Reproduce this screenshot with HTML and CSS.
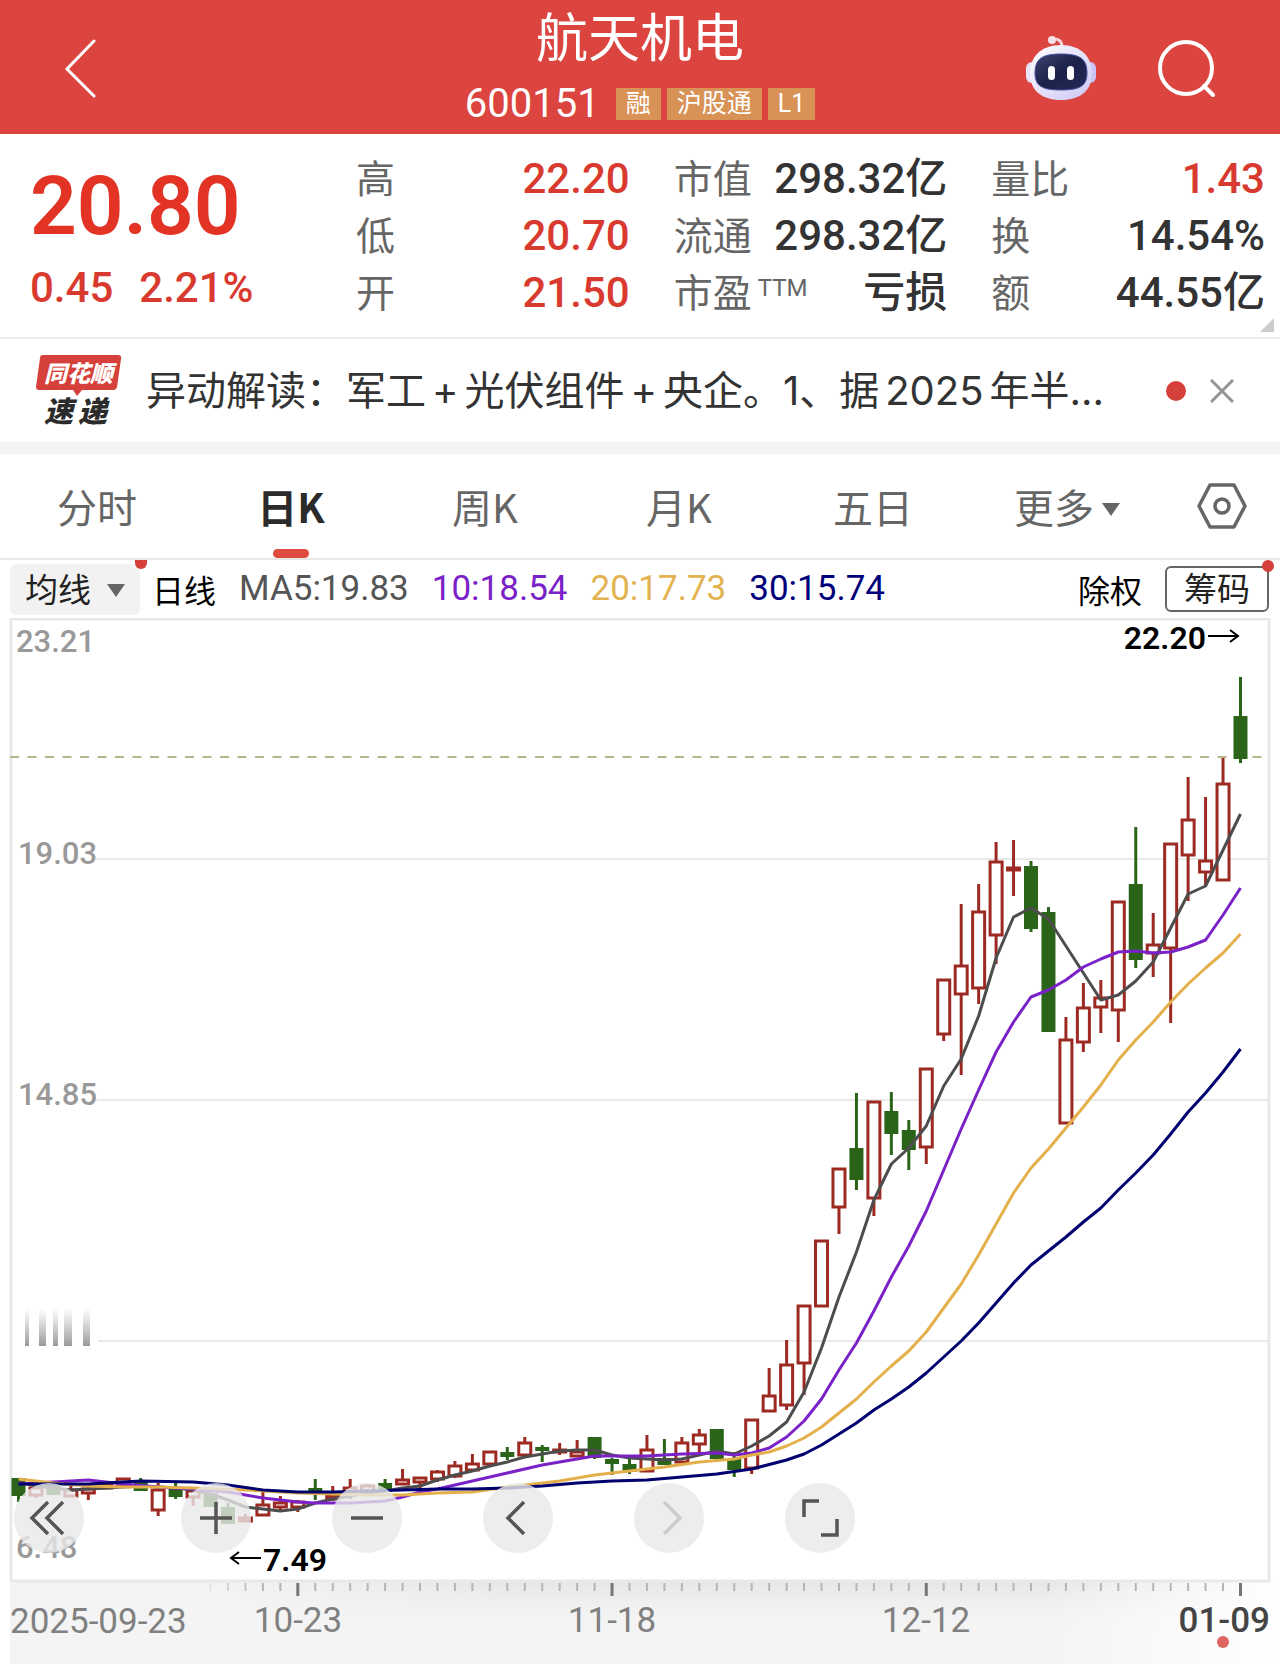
FILE: index.html
```
<!DOCTYPE html>
<html lang="zh-CN">
<head>
    <meta charset="UTF-8">
    <meta name="viewport" content="width=device-width, initial-scale=1.0">
    <title>航天机电 600151</title>
    <link rel="stylesheet" href="styles.css">
</head>
<body>
    <header class="header">
        <button type="button" class="icon-btn back" aria-label="返回">
            <svg width="32" height="60" viewBox="0 0 32 60"><path d="M30 3 L3 31 L30 58" fill="none" stroke="#fff" stroke-width="3" stroke-linecap="round"/></svg>
        </button>
        <div class="title">
            <h1>航天机电</h1>
            <div class="code">
                <span class="code-num">600151</span>
                <span class="badge">融</span>
                <span class="badge">沪股通</span>
                <span class="badge">L1</span>
            </div>
        </div>
        <div class="header-icons">
            <button type="button" class="icon-btn" aria-label="助手">
                <svg width="70" height="66" viewBox="0 0 70 66">
                    <defs>
                        <linearGradient id="shell" x1="0" y1="0" x2="1" y2="1">
                            <stop offset="0" stop-color="#fff"/>
                            <stop offset="1" stop-color="#cbc6f4"/>
                        </linearGradient>
                        <linearGradient id="face" x1="0" y1="0" x2="1" y2="1">
                            <stop offset="0" stop-color="#3b4470"/>
                            <stop offset="0.5" stop-color="#1b2148"/>
                            <stop offset="1" stop-color="#242b58"/>
                        </linearGradient>
                    </defs>
                    <path d="M26 4 Q36 3 36 12" fill="none" stroke="#f3d5de" stroke-width="3"/>
                    <circle cx="26" cy="5" r="4" fill="#f6dfe6"/>
                    <rect x="0" y="27" width="12" height="21" rx="6" fill="#e6e2fa"/>
                    <rect x="58" y="27" width="12" height="21" rx="6" fill="#c9c4f5"/>
                    <path d="M35 10 C55 10 66 22 66 38 C66 56 54 65 35 65 C16 65 4 56 4 38 C4 22 15 10 35 10 Z" fill="url(#shell)"/>
                    <path d="M35 19 C54 19 61 24 61 38 C61 51 54 55 35 55 C16 55 9 51 9 38 C9 24 16 19 35 19 Z" fill="url(#face)" stroke="#4a4ea0" stroke-width="1"/>
                    <rect x="22" y="31" width="7" height="14" rx="3.5" fill="#fff"/>
                    <rect x="41" y="31" width="7" height="14" rx="3.5" fill="#fff"/>
                </svg>
            </button>
            <button type="button" class="icon-btn" aria-label="搜索">
                <svg width="60" height="60" viewBox="0 0 60 60"><g fill="none" stroke="#fff" stroke-width="4" stroke-linecap="round"><circle cx="30" cy="30" r="26"/><path d="M48 48 L57 57"/></g></svg>
            </button>
        </div>
    </header>

    <section class="quote">
        <div class="last">
            <div class="price">20.80</div>
            <div class="change"><span>0.45</span><span>2.21%</span></div>
        </div>
        <dl class="stats">
            <div><dt>高</dt><dd class="up">22.20</dd></div>
            <div><dt>低</dt><dd class="up">20.70</dd></div>
            <div><dt>开</dt><dd class="up">21.50</dd></div>
        </dl>
        <dl class="stats">
            <div><dt>市值</dt><dd>298.32亿</dd></div>
            <div><dt>流通</dt><dd>298.32亿</dd></div>
            <div><dt>市盈<span class="ttm">TTM</span></dt><dd>亏损</dd></div>
        </dl>
        <dl class="stats">
            <div><dt>量比</dt><dd class="up">1.43</dd></div>
            <div><dt>换</dt><dd>14.54%</dd></div>
            <div><dt>额</dt><dd>44.55亿</dd></div>
        </dl>
        <span class="corner"></span>
    </section>

    <section class="news">
        <svg class="news-logo" width="86" height="94" viewBox="0 -10 86 94">
            <path d="M7 1 H82 Q86 1 85 5 L81 33 Q80 36 77 36 H46 L41 42 L37 36 H3 Q0 36 0 33 L4 4 Q4 1 7 1 Z" fill="#d5403b"/>
            <text x="8" y="28" class="logo-top">同花顺</text>
            <text x="8" y="68" class="logo-bottom">速</text>
            <text x="42" y="68" class="logo-bottom">递</text>
        </svg>
        <p class="news-text">异动解读：军工<span class="spaced">+</span>光伏组件<span class="spaced">+</span>央企。1、据<span class="spaced">2025</span>年半...</p>
        <span class="news-dot"></span>
        <button type="button" class="icon-btn" aria-label="关闭">
            <svg width="24" height="24" viewBox="0 0 24 24"><path d="M1 1 L23 23 M23 1 L1 23" stroke="#949494" stroke-width="3"/></svg>
        </button>
    </section>

    <nav class="tabs">
        <button type="button" class="tab">分时</button>
        <button type="button" class="tab active">日K</button>
        <button type="button" class="tab">周K</button>
        <button type="button" class="tab">月K</button>
        <button type="button" class="tab">五日</button>
        <button type="button" class="tab">更多<svg class="tab-arrow" width="18" height="13" viewBox="0 0 18 13"><path d="M0 0 H18 L9 13 Z" fill="#666"/></svg></button>
        <button type="button" class="icon-btn settings" aria-label="设置">
            <svg width="50" height="46" viewBox="0 0 50 46"><g fill="none" stroke="#666" stroke-width="3.5" stroke-linejoin="round"><path d="M13 2 H37 L48 23 L37 44 H13 L2 23 Z"/><circle cx="25" cy="23" r="7"/></g></svg>
        </button>
    </nav>

    <div class="ma-bar">
        <button type="button" class="ma-select">均线<svg width="18" height="13" viewBox="0 0 18 13"><path d="M0 0 H18 L9 13 Z" fill="#666"/></svg></button>
        <span class="ma-type">日线</span>
        <span class="ma ma5">MA5:19.83</span>
        <span class="ma ma10">10:18.54</span>
        <span class="ma ma20">20:17.73</span>
        <span class="ma ma30">30:15.74</span>
        <button type="button" class="adjust">除权</button>
        <button type="button" class="chips">筹码</button>
    </div>

    <main class="chart">
        <svg id="kline" viewBox="0 618 1280 1046">
            <defs>
                <linearGradient id="axisShade" x1="0" y1="0" x2="0" y2="1">
                    <stop offset="0" stop-color="#e6e6e6"/>
                    <stop offset="1" stop-color="#f4f4f4" stop-opacity="0"/>
                </linearGradient>
                <linearGradient id="fadeLeft" x1="0" y1="0" x2="1" y2="0">
                    <stop offset="0" stop-color="#f4f4f4"/>
                    <stop offset="1" stop-color="#f4f4f4" stop-opacity="0"/>
                </linearGradient>
                <linearGradient id="fadeRight" x1="0" y1="0" x2="1" y2="0">
                    <stop offset="0" stop-color="#fff" stop-opacity="0"/>
                    <stop offset="1" stop-color="#fff"/>
                </linearGradient>
                <linearGradient id="smudge" x1="0" y1="0" x2="0" y2="1">
                    <stop offset="0" stop-color="#aaa" stop-opacity="0"/>
                    <stop offset="1" stop-color="#999"/>
                </linearGradient>
            </defs>
            <rect x="10" y="1582" width="1270" height="82" fill="#f4f4f4"/>
            <rect x="200" y="1582" width="1080" height="50" fill="url(#axisShade)"/>
            <rect x="200" y="1582" width="300" height="82" fill="url(#fadeLeft)"/>
            <rect x="1040" y="1582" width="240" height="82" fill="url(#fadeRight)"/>
            <rect x="11" y="619" width="1258" height="962" fill="#fff" stroke="#e9e9e9" stroke-width="3"/>
            <path d="M96 859 H1268 M96 1100 H1268 M98 1341 H1268" stroke="#e9e9e9" stroke-width="2"/>
            <path d="M10 757 H1270" stroke="#b5b58c" stroke-width="2" stroke-dasharray="9 8.5"/>
            <g fill="url(#smudge)">
                <rect x="25" y="1308" width="4" height="38"/>
                <rect x="39" y="1308" width="7" height="38"/>
                <rect x="53" y="1308" width="5" height="38"/>
                <rect x="64" y="1308" width="8" height="38"/>
                <rect x="83" y="1308" width="7" height="38"/>
            </g>
            <g class="price-label">
                <text x="16" y="652">23.21</text>
                <text x="18" y="864">19.03</text>
                <text x="18" y="1105">14.85</text>
                <text x="16" y="1558">6.48</text>
            </g>
            <g id="candles"></g>
            <g id="lines"></g>
            <g id="ticks"></g>
            <g class="mark">
                <text x="1206" y="649" text-anchor="end">22.20</text>
                <text x="263" y="1571">7.49</text>
                <path d="M1208 636 H1238 M1230 630 L1238 636 L1230 642"/>
                <path d="M261 1558 H231 M239 1552 L231 1558 L239 1564"/>
            </g>
            <g class="date-label">
                <text x="10" y="1633">2025-09-23</text>
                <text x="298" y="1632" text-anchor="middle">10-23</text>
                <text x="612" y="1632" text-anchor="middle">11-18</text>
                <text x="926" y="1632" text-anchor="middle">12-12</text>
                <text x="1270" y="1632" text-anchor="end" class="today">01-09</text>
            </g>
            <circle cx="1223" cy="1642" r="6" fill="#df6560"/>
        </svg>
        <div class="tools">
            <button type="button" class="tool first" aria-label="最左"><svg viewBox="0 0 70 70"><path d="M34 19 L18 35 L34 51 M49 19 L33 35 L49 51"/></svg></button>
            <button type="button" class="tool" aria-label="放大"><svg viewBox="0 0 70 70"><path d="M19 35 H51 M35 19 V51"/></svg></button>
            <button type="button" class="tool" aria-label="缩小"><svg viewBox="0 0 70 70"><path d="M19 35 H51"/></svg></button>
            <button type="button" class="tool" aria-label="左移"><svg viewBox="0 0 70 70"><path d="M41 19 L25 35 L41 51"/></svg></button>
            <button type="button" class="tool" aria-label="右移" disabled><svg viewBox="0 0 70 70"><path d="M30 19 L46 35 L30 51"/></svg></button>
            <button type="button" class="tool" aria-label="全屏"><svg viewBox="0 0 70 70"><path d="M19 34 V18 H34 M52 36 V52 H36"/></svg></button>
        </div>
    </main>

    <script src="chart.js"></script>
</body>
</html>
```

FILE: styles.css
```
* {
    box-sizing: border-box;
}
body {
    margin: 0;
    background: #fff;
    color: #333;
    font-family: Roboto, "Noto Sans CJK SC", sans-serif;
}
h1, p, dl, dd {
    margin: 0;
}
button {
    padding: 0;
    border: none;
    background: none;
    font-family: inherit;
    cursor: pointer;
}
.icon-btn {
    display: flex;
    align-items: center;
    justify-content: center;
}

/* header */
.header {
    display: grid;
    grid-template-columns: 1fr auto 1fr;
    align-items: center;
    height: 134px;
    padding: 2px 64px 0;
    background: #dc443f;
    color: #fff;
}
.back {
    justify-self: start;
}
.title {
    text-align: center;
}
.title h1 {
    font-size: 52px;
    font-weight: 400;
    line-height: 72px;
}
.code {
    display: flex;
    align-items: center;
    justify-content: center;
    gap: 6px;
    line-height: 56px;
}
.code-num {
    margin-right: 10px;
    font-size: 40px;
}
.badge {
    height: 32px;
    padding: 0 10px;
    background: #d99255;
    font-size: 25px;
    line-height: 32px;
}
.header-icons {
    display: flex;
    align-items: center;
    justify-content: flex-end;
    gap: 60px;
}

/* quote */
.quote {
    position: relative;
    display: grid;
    grid-template-columns: 282px 1fr 1fr 1fr;
    column-gap: 44px;
    padding: 16px 15px 16px 30px;
    border-bottom: 2px solid #eee;
}
.price {
    color: #e23324;
    font-size: 82px;
    font-weight: 600;
    line-height: 112px;
}
.change {
    display: flex;
    gap: 26px;
    color: #d93a2f;
    font-size: 42px;
    font-weight: 500;
    line-height: 52px;
}
.stats > div {
    display: flex;
    justify-content: space-between;
    height: 57px;
    line-height: 57px;
}
.stats dt {
    padding-top: 2px;
    color: #666;
    font-size: 39px;
    white-space: nowrap;
}
.stats dd {
    font-size: 42px;
    font-weight: 500;
    white-space: nowrap;
}
.stats .up {
    color: #d93a2f;
}
.ttm {
    margin-left: 6px;
    font-size: 24px;
    vertical-align: 11px;
    line-height: 24px;
}
.corner {
    position: absolute;
    right: 6px;
    bottom: 5px;
    border-left: 14px solid transparent;
    border-bottom: 14px solid #ccc;
}

/* news */
.news {
    display: flex;
    align-items: center;
    height: 115px;
    padding: 0 46px 0 36px;
    border-bottom: 12px solid #f4f4f4;
}
.news-logo {
    flex: none;
    margin-right: 24px;
}
.logo-top, .logo-bottom {
    font-family: "Noto Sans CJK SC", sans-serif;
    font-style: italic;
    font-weight: 900;
}
.logo-top {
    fill: #fff;
    font-size: 23px;
}
.logo-bottom {
    fill: #2b2b2b;
    font-size: 29px;
}
.news-text {
    flex: 1;
    overflow: hidden;
    font-family: Inter, "Noto Sans CJK SC", sans-serif;
    font-size: 40px;
    line-height: 56px;
    white-space: nowrap;
}
.spaced {
    margin: 0 6px;
}
.news-dot {
    width: 20px;
    height: 20px;
    margin-right: 24px;
    border-radius: 50%;
    background: #d5403b;
}

/* tabs */
.tabs {
    display: flex;
    height: 106px;
    border-bottom: 2px solid #e8e8e8;
}
.tab {
    position: relative;
    flex: 1;
    color: #666;
    font-family: "Noto Sans CJK SC", sans-serif;
    font-size: 40px;
}
.tab.active {
    color: #2b2b2b;
    font-weight: 700;
}
.tab.active::after {
    content: "";
    position: absolute;
    left: 50%;
    bottom: 0;
    width: 36px;
    height: 9px;
    margin-left: -18px;
    border-radius: 5px;
    background: #df4b3f;
}
.tab-arrow {
    margin: 0 0 7px 8px;
}
.settings {
    width: 116px;
}

/* moving averages */
.ma-bar {
    display: flex;
    align-items: center;
    gap: 23px;
    height: 58px;
    padding: 0 11px 0 10px;
}
.ma-select, .chips {
    position: relative;
    padding-top: 2px;
    color: #222;
    font-size: 33px;
}
.ma-select {
    width: 130px;
    height: 51px;
    border-radius: 6px;
    background: #f2f2f2;
    line-height: 49px;
}
.ma-select svg {
    margin: 0 0 5px 16px;
}
.ma-select::after, .chips::after {
    content: "";
    position: absolute;
    top: -8px;
    right: -7px;
    width: 12px;
    height: 12px;
    border-radius: 50%;
    background: #d5403b;
}
.ma-select::after {
    top: -4px;
    height: 9px;
    border-radius: 0 0 6px 6px;
}
.ma-type {
    margin-left: -11px;
    color: #000;
    font-size: 32px;
}
.ma {
    font-size: 35px;
    line-height: 40px;
}
.ma5 {
    color: #555;
}
.ma10 {
    color: #7a22c8;
}
.ma20 {
    color: #e3b350;
}
.ma30 {
    color: #00007a;
}
.adjust {
    margin-left: auto;
    color: #000;
    font-size: 32px;
}
.chips {
    width: 104px;
    height: 46px;
    border: 2px solid #666;
    border-radius: 6px;
    line-height: 40px;
}

/* chart */
.chart {
    position: relative;
}
.chart > svg {
    display: block;
    width: 100%;
}
.price-label {
    fill: #999;
    font-size: 31px;
    font-weight: 500;
}
.date-label {
    fill: #808080;
    font-size: 35px;
}
.date-label .today {
    fill: #444;
    font-weight: 500;
}
.mark text {
    font-size: 32px;
    font-weight: 600;
}
.mark path {
    fill: none;
    stroke: #000;
    stroke-width: 2;
}
.tools {
    position: absolute;
    left: 14px;
    bottom: 111px;
    display: flex;
    gap: 81px;
}
.tool {
    width: 70px;
    height: 70px;
    border-radius: 50%;
    background: rgba(232, 232, 232, 0.8);
}
.tool.first {
    margin-right: 16px;
}
.tool svg {
    display: block;
    fill: none;
    stroke: #555;
    stroke-width: 3.5;
}
.tool:disabled svg {
    stroke: #ccc;
}
```

FILE: chart.js
```
const SVG = 'http://www.w3.org/2000/svg';
const START = 18.5;
const STEP = 17.457;
const RED = '#9c2a22';
const GREEN = '#2a6418';

// [rising, high, body top, body bottom, low]
const candles = [
    [0, 1478, 1478, 1496, 1502], [1, 1487, 1488, 1495, 1498], [0, 1482, 1483, 1495, 1495],
    [1, 1486, 1490, 1496, 1497], [1, 1487, 1489, 1493, 1500], [1, 1483, 1484, 1488, 1489],
    [1, 1478, 1479, 1485, 1485], [0, 1478, 1480, 1491, 1491], [1, 1483, 1490, 1510, 1516],
    [0, 1483, 1488, 1497, 1499], [1, 1488, 1491, 1497, 1506], [0, 1493, 1493, 1507, 1507],
    [0, 1503, 1507, 1524, 1524], [1, 1514, 1518, 1521, 1522], [1, 1491, 1505, 1515, 1516],
    [1, 1496, 1503, 1507, 1510], [1, 1500, 1502, 1507, 1512], [0, 1479, 1488, 1493, 1500],
    [1, 1486, 1496, 1499, 1501], [1, 1479, 1488, 1492, 1499], [1, 1484, 1486, 1491, 1491],
    [0, 1479, 1483, 1489, 1489], [1, 1469, 1480, 1484, 1485], [1, 1477, 1478, 1482, 1489],
    [1, 1470, 1472, 1479, 1482], [1, 1461, 1466, 1476, 1478], [1, 1454, 1464, 1470, 1471],
    [1, 1452, 1452, 1464, 1464], [0, 1447, 1452, 1457, 1460], [1, 1437, 1443, 1455, 1455],
    [0, 1445, 1447, 1451, 1462], [1, 1443, 1450, 1452, 1455], [1, 1440, 1452, 1456, 1457],
    [0, 1437, 1437, 1458, 1459], [0, 1458, 1459, 1464, 1475], [0, 1459, 1464, 1472, 1474],
    [1, 1435, 1450, 1471, 1471], [0, 1439, 1458, 1465, 1465], [1, 1437, 1443, 1462, 1462],
    [1, 1429, 1435, 1444, 1452], [0, 1429, 1429, 1459, 1461], [0, 1452, 1459, 1470, 1477],
    [1, 1419, 1420, 1468, 1474], [1, 1368, 1396, 1411, 1411], [1, 1340, 1365, 1405, 1410],
    [1, 1305, 1306, 1363, 1395], [1, 1241, 1241, 1306, 1306], [1, 1169, 1169, 1207, 1234],
    [0, 1093, 1148, 1180, 1190], [1, 1101, 1102, 1198, 1216], [0, 1092, 1111, 1134, 1155],
    [0, 1120, 1130, 1150, 1170], [1, 1068, 1069, 1147, 1164], [1, 979, 980, 1034, 1041],
    [1, 904, 966, 994, 1075], [1, 884, 912, 988, 1004], [1, 842, 862, 935, 964],
    [1, 840, 868, 870, 896], [0, 861, 866, 929, 932], [0, 907, 912, 1032, 1032],
    [1, 1017, 1040, 1123, 1123], [1, 983, 1008, 1042, 1052], [1, 980, 998, 1007, 1033],
    [1, 902, 902, 1010, 1042], [0, 827, 884, 960, 968], [1, 913, 945, 953, 977],
    [1, 843, 844, 948, 1023], [1, 777, 820, 855, 901], [1, 797, 861, 872, 885],
    [1, 758, 784, 880, 880], [0, 677, 716, 759, 763]
];

// [candle index, y]
const averages = [
    { color: '#4d4d4d', points: [[0,1482],[1,1486],[2,1488],[3,1490],[4,1489],[5,1488],[6,1487],[7,1486],[8,1487],[9,1488],[10,1490],[11,1494],[12,1500],[13,1507],[14,1509],[15,1511],[16,1509],[17,1503],[18,1499],[19,1496],[20,1493],[21,1491],[22,1488],[23,1486],[24,1480],[25,1475],[26,1471],[27,1466],[28,1462],[29,1457],[30,1454],[31,1451],[32,1450],[33,1450],[34,1455],[35,1458],[36,1459],[37,1460],[38,1459],[39,1455],[40,1451],[41,1454],[42,1446],[43,1436],[44,1422],[45,1392],[46,1348],[47,1297],[48,1252],[49,1200],[50,1164],[51,1148],[52,1126],[53,1086],[54,1059],[55,1016],[56,958],[57,917],[58,908],[59,919],[60,946],[61,973],[62,1000],[63,995],[64,981],[65,962],[66,928],[67,894],[68,886],[69,850],[70,814]] },
    { color: '#7a22c8', points: [[0,1484],[2,1482],[4,1480],[6,1484],[8,1487],[10,1489],[12,1492],[13,1495],[14,1498],[15,1500],[16,1502],[17,1503],[19,1503],[21,1501],[22,1497],[23,1492],[24,1489],[25,1485],[26,1481],[27,1477],[28,1473],[29,1469],[30,1465],[31,1462],[32,1459],[33,1456],[36,1456],[38,1454],[40,1453],[41,1455],[42,1453],[43,1448],[44,1437],[45,1421],[46,1399],[47,1370],[48,1343],[49,1311],[50,1277],[51,1246],[52,1211],[53,1170],[54,1129],[55,1090],[56,1052],[57,1022],[58,997],[59,990],[60,980],[61,967],[62,959],[63,952],[64,951],[65,953],[66,952],[67,947],[68,940],[69,915],[70,888]] },
    { color: '#e3b04b', points: [[0,1479],[2,1483],[4,1486],[6,1487],[8,1487],[10,1488],[13,1490],[16,1493],[20,1495],[22,1495],[24,1493],[26,1492],[28,1487],[29,1485],[31,1481],[33,1475],[35,1471],[37,1467],[39,1462],[41,1459],[42,1455],[43,1452],[44,1446],[45,1438],[46,1427],[47,1413],[48,1399],[49,1382],[50,1366],[51,1351],[52,1332],[53,1308],[54,1284],[55,1255],[56,1224],[57,1193],[58,1168],[59,1149],[60,1128],[61,1107],[62,1085],[63,1060],[64,1040],[65,1022],[66,1002],[67,984],[68,968],[69,953],[70,934]] },
    { color: '#00006e', points: [[0,1484],[4,1484],[7,1481],[10,1482],[12,1485],[14,1490],[16,1492],[18,1492],[20,1491],[22,1490],[24,1489],[26,1489],[28,1488],[30,1486],[32,1483],[34,1481],[36,1480],[38,1477],[40,1474],[42,1469],[44,1460],[45,1454],[46,1445],[47,1434],[48,1423],[49,1410],[50,1399],[51,1387],[52,1373],[53,1357],[54,1341],[55,1323],[56,1303],[57,1283],[58,1265],[59,1251],[60,1237],[61,1222],[62,1208],[63,1190],[64,1173],[65,1155],[66,1134],[67,1112],[68,1093],[69,1072],[70,1049]] }
];

function add(parent, name, attrs) {
    const el = document.createElementNS(SVG, name);
    for (const key in attrs) el.setAttribute(key, attrs[key]);
    document.getElementById(parent).appendChild(el);
}

const xOf = i => START + STEP * i;

candles.forEach(([up, high, top, bottom, low], i) => {
    const x = xOf(i);
    const color = up ? RED : GREEN;
    add('candles', 'path', { d: `M${x} ${high} V${low}`, stroke: color, 'stroke-width': 3 });
    if (up) {
        add('candles', 'rect', { x: x - 6, y: top, width: 12, height: bottom - top, fill: '#fff', stroke: color, 'stroke-width': 3 });
    } else {
        add('candles', 'rect', { x: x - 7, y: top, width: 14, height: bottom - top, fill: color });
    }
});

averages.forEach(({ color, points }) => {
    const list = points.map(([i, y]) => `${xOf(i)},${y}`).join(' ');
    add('lines', 'polyline', { points: list, fill: 'none', stroke: color, 'stroke-width': 3, 'stroke-linejoin': 'round' });
});

// ticks fade in over the first few days, month marks are longer
for (let i = 11; i <= 70; i++) {
    const major = (i - 16) % 18 === 0;
    add('ticks', 'path', {
        d: `M${xOf(i)} 1583 v${major ? 13 : 8}`,
        stroke: major ? '#777' : '#b5b5b5',
        'stroke-width': major ? 3 : 2,
        opacity: Math.min(1, (i - 10) / 4)
    });
}
```
